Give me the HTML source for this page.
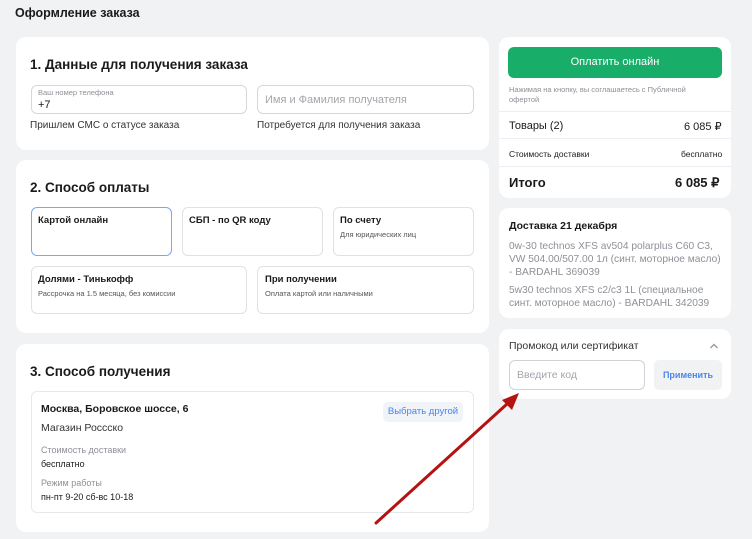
<!DOCTYPE html>
<html><head><meta charset="utf-8">
<style>
*{margin:0;padding:0;box-sizing:border-box}
body{width:752px;height:539px;background:#f1f2f4;font-family:"Liberation Sans","Noto Sans CJK SC",sans-serif;color:#1a1a1a;position:relative;overflow:hidden}
.a{position:absolute;white-space:nowrap}
.card{position:absolute;background:#fff;border-radius:10px}
.box{position:absolute;border:1px solid #dfe1e5;border-radius:6px;background:#fff}
.h{font-size:13.5px;font-weight:bold}
.s{font-size:10px}
.g{color:#8d9096}
.b{font-weight:bold}
.line{position:absolute;height:1px;background:#eceef1;left:499px;width:232px}
</style></head><body>
<div class="a b" style="left:15px;top:6px;font-size:12.5px">Оформление заказа</div>

<div class="card" style="left:16px;top:37px;width:473px;height:113px"></div>
<div class="card" style="left:16px;top:160px;width:473px;height:173px"></div>
<div class="card" style="left:16px;top:344px;width:473px;height:188px"></div>

<div class="a h" style="left:30px;top:57px">1. Данные для получения заказа</div>
<div class="box" style="left:31px;top:85px;width:216px;height:29px;border-color:#d5d7db"></div>
<div class="a g" style="left:38px;top:88px;font-size:7.5px">Ваш номер телефона</div>
<div class="a" style="left:38px;top:99px;font-size:11px">+7</div>
<div class="box" style="left:257px;top:85px;width:217px;height:29px;border-color:#d5d7db"></div>
<div class="a" style="left:265px;top:94px;font-size:11px;color:#a3a6ab">Имя и Фамилия получателя</div>
<div class="a s" style="left:30px;top:120px;color:#333">Пришлем СМС о статусе заказа</div>
<div class="a s" style="left:257px;top:120px;color:#333">Потребуется для получения заказа</div>

<div class="a h" style="left:30px;top:180px">2. Способ оплаты</div>
<div class="box" style="left:31px;top:207px;width:141px;height:49px;border-color:#7aa8ee"></div>
<div class="box" style="left:182px;top:207px;width:141px;height:49px"></div>
<div class="box" style="left:333px;top:207px;width:141px;height:49px"></div>
<div class="box" style="left:31px;top:266px;width:216px;height:48px"></div>
<div class="box" style="left:257px;top:266px;width:217px;height:48px"></div>
<div class="a b" style="left:38px;top:215px;font-size:9.5px">Картой онлайн</div>
<div class="a b" style="left:189px;top:215px;font-size:9.5px">СБП - по QR коду</div>
<div class="a b" style="left:340px;top:215px;font-size:9.5px">По счету</div>
<div class="a" style="left:340px;top:230px;font-size:7.5px;color:#555">Для юридических лиц</div>
<div class="a b" style="left:38px;top:274px;font-size:9.5px">Долями - Тинькофф</div>
<div class="a" style="left:38px;top:289px;font-size:7.5px;color:#555">Рассрочка на 1.5 месяца, без комиссии</div>
<div class="a b" style="left:265px;top:274px;font-size:9.5px">При получении</div>
<div class="a" style="left:265px;top:289px;font-size:7.5px;color:#555">Оплата картой или наличными</div>

<div class="a h" style="left:30px;top:364px">3. Способ получения</div>
<div class="box" style="left:31px;top:391px;width:443px;height:122px;border-color:#e6e8eb"></div>
<div class="a b" style="left:41px;top:403px;font-size:10.5px">Москва, Боровское шоссе, 6</div>
<div class="a" style="left:383px;top:402px;width:80px;height:20px;background:#f0f3f8;border-radius:5px;color:#4a86e8;font-size:9.5px;text-align:center;line-height:20px">Выбрать другой</div>
<div class="a" style="left:41px;top:422px;font-size:10.5px;color:#333">Магазин Россско</div>
<div class="a g" style="left:41px;top:445px;font-size:9px">Стоимость доставки</div>
<div class="a" style="left:41px;top:459px;font-size:9px">бесплатно</div>
<div class="a g" style="left:41px;top:478px;font-size:9px">Режим работы</div>
<div class="a" style="left:41px;top:492px;font-size:9px">пн-пт 9-20 сб-вс 10-18</div>

<div class="card" style="left:499px;top:37px;width:232px;height:161px"></div>
<div class="a" style="left:508px;top:47px;width:214px;height:31px;background:#19ad6a;border-radius:6px;color:#fff;font-size:11px;text-align:center;line-height:31px">Оплатить онлайн</div>
<div class="a g" style="left:509px;top:85px;font-size:7.5px;line-height:10px">Нажимая на кнопку, вы соглашаетесь с Публичной<br>офертой</div>
<div class="line" style="top:111px"></div>
<div class="a" style="left:509px;top:120px;font-size:11px">Товары (2)</div>
<div class="a" style="left:684px;top:120px;font-size:11px">6 085 ₽</div>
<div class="line" style="top:138px"></div>
<div class="a" style="left:509px;top:149px;font-size:8.5px">Стоимость доставки</div>
<div class="a" style="left:681px;top:149px;font-size:8.5px">бесплатно</div>
<div class="line" style="top:166px"></div>
<div class="a b" style="left:509px;top:175px;font-size:13px">Итого</div>
<div class="a b" style="left:675px;top:175px;font-size:13px">6 085 ₽</div>

<div class="card" style="left:499px;top:208px;width:232px;height:110px"></div>
<div class="a b" style="left:509px;top:220px;font-size:10.5px">Доставка 21 декабря</div>
<div class="a" style="left:509px;top:240px;font-size:10.2px;line-height:13px;color:#8d9096">0w-30 technos XFS av504 polarplus C60 C3,<br>VW 504.00/507.00 1л (синт. моторное масло)<br>- BARDAHL 369039</div>
<div class="a" style="left:509px;top:284px;font-size:10.2px;line-height:13px;color:#8d9096">5w30 technos XFS c2/c3 1L (специальное<br>синт. моторное масло) - BARDAHL 342039</div>

<div class="card" style="left:499px;top:329px;width:232px;height:70px"></div>
<div class="a" style="left:509px;top:340px;font-size:10.5px;color:#333">Промокод или сертификат</div>
<svg class="a" style="left:709px;top:342px" width="10" height="8"><path d="M1.5 6 L5 2.5 L8.5 6" fill="none" stroke="#999" stroke-width="1.4"/></svg>
<div class="box" style="left:509px;top:360px;width:136px;height:30px;border-color:#cfd2d6"></div>
<div class="a" style="left:517px;top:369px;font-size:10.5px;color:#a3a6ab">Введите код</div>
<div class="a" style="left:654px;top:360px;width:68px;height:30px;background:#f1f2f4;border-radius:5px;color:#4a86e8;font-size:9px;text-align:center;line-height:30px;font-weight:bold">Применить</div>

<svg class="a" style="left:0;top:0" width="752" height="539">
<path d="M376 523 L507 404" stroke="#b51212" stroke-width="3" stroke-linecap="round"/>
<polygon points="519,393 502,400 512,410" fill="#b51212"/>
</svg>
</body></html>
